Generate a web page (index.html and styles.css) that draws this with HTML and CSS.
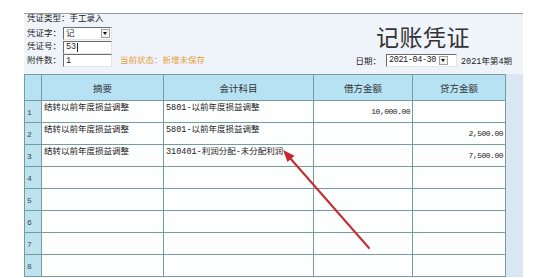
FILE: index.html
```html
<!DOCTYPE html>
<html lang="zh-CN">
<head>
  <meta charset="UTF-8">
  <title>记账凭证</title>
  <link rel="stylesheet" href="styles.css">
</head>
<body>

<div class="voucher">
  <div class="voucher-head">
    <div class="fields">
      <div class="field first">凭证类型：手工录入</div>
      <div class="field">
        <span class="label">凭证字：</span>
        <span class="select w-short"><span class="val">记</span><span class="drop"></span></span>
      </div>
      <div class="field">
        <span class="label">凭证号：</span>
        <span class="box w-short"><span class="val">53</span><span class="caret"></span></span>
      </div>
      <div class="field">
        <span class="label">附件数：</span>
        <span class="box w-short"><span class="val">1</span></span>
        <span class="status">当前状态：新增未保存</span>
      </div>
    </div>

    <div class="title-block">
      <div class="title">记账凭证</div>
      <div class="date-row">
        <span>日期：</span>
        <span class="select w-date"><span class="val">2021-04-30</span><span class="drop"></span></span>
        <span class="period">2021年第4期</span>
      </div>
    </div>
  </div>

  <div class="voucher-body">
    <table class="grid">
      <colgroup>
        <col class="c-no">
        <col class="c-sum">
        <col class="c-acc">
        <col class="c-debit">
        <col class="c-credit">
      </colgroup>
      <thead>
        <tr>
          <th class="no"></th>
          <th>摘要</th>
          <th>会计科目</th>
          <th>借方金额</th>
          <th>贷方金额</th>
        </tr>
      </thead>
      <tbody>
        <tr>
          <td class="no">1</td>
          <td class="txt">结转以前年度损益调整</td>
          <td class="txt">5801-以前年度损益调整</td>
          <td class="num">10,000.00</td>
          <td class="num"></td>
        </tr>
        <tr>
          <td class="no">2</td>
          <td class="txt">结转以前年度损益调整</td>
          <td class="txt">5801-以前年度损益调整</td>
          <td class="num"></td>
          <td class="num">2,500.00</td>
        </tr>
        <tr>
          <td class="no">3</td>
          <td class="txt">结转以前年度损益调整</td>
          <td class="txt">310401-利润分配-未分配利润</td>
          <td class="num"></td>
          <td class="num">7,500.00</td>
        </tr>
        <tr><td class="no">4</td><td></td><td></td><td></td><td></td></tr>
        <tr><td class="no">5</td><td></td><td></td><td></td><td></td></tr>
        <tr><td class="no">6</td><td></td><td></td><td></td><td></td></tr>
        <tr><td class="no">7</td><td></td><td></td><td></td><td></td></tr>
        <tr><td class="no">8</td><td></td><td></td><td></td><td></td></tr>
      </tbody>
    </table>
    <div class="scroll-strip"></div>
  </div>
</div>

<!-- 红色标注箭头 -->
<svg class="arrow" width="547" height="278" viewBox="0 0 547 278">
  <line x1="369" y1="248" x2="290" y2="158" stroke="#c62a2f" stroke-width="2" stroke-linecap="round"/>
  <polygon points="283,150 294.5,155.8 287.5,162" fill="#c62a2f"/>
</svg>

</body>
</html>
```

FILE: styles.css
```css
/* 凭证录入界面 */
body {
  margin: 0;
  background: #fff;
  color: #222;
  font-family: "Liberation Mono", "Noto Sans CJK SC", monospace;
  font-size: 8.5px;
  overflow: hidden;
  height: 278px;
}

.voucher {
  margin: 13px 0 0 24px;
  width: 499px;
  border-top: 1px solid #9a9a9a;
  background: #eef4fa;
}

.voucher-head {
  height: 60px;
  display: flex;
  justify-content: space-between;
}

.fields {
  padding-left: 3px;
}

.field {
  display: flex;
  align-items: center;
  height: 13.5px;
  line-height: 10px;
  white-space: nowrap;
}

.field.first {
  height: 13px;
  align-items: flex-start;
}

.label {
  width: 36px;
}

.select, .box {
  display: flex;
  align-items: center;
  height: 11px;
  background: #fff;
  border-top: 1px solid #6d6d6d;
  border-left: 1px solid #6d6d6d;
  border-bottom: 1px solid #e4e4e4;
  border-right: 1px solid #e4e4e4;
  white-space: nowrap;
}

.w-short {
  width: 47px;
}

.w-date {
  width: 69px;
}

.val {
  flex: 1;
  padding-left: 2px;
}

.box .val {
  flex: none;
}

.caret {
  width: 1px;
  height: 9px;
  margin-left: 1px;
  background: #222;
}

.w-date .val {
  letter-spacing: -0.4px;
}

.drop {
  position: relative;
  width: 7px;
  height: 7px;
  margin-right: 1px;
  border: 1px solid #a0a0a0;
  background: #f2f2f2;
}

.drop::after {
  content: "";
  position: absolute;
  left: 1px;
  top: 2px;
  border-left: 2.5px solid transparent;
  border-right: 2.5px solid transparent;
  border-top: 3px solid #111;
}

.w-date .drop {
  margin-right: 8px;
}

.status {
  margin-left: 8px;
  color: #e8a23c;
}

.title-block {
  display: flex;
  flex-direction: column;
  align-items: flex-end;
  padding-right: 11px;
}

.title {
  margin-top: 11px;
  margin-right: 42px;
  font-family: "Noto Sans CJK SC", sans-serif;
  font-size: 23px;
  line-height: 23px;
  color: #333;
  letter-spacing: 0.5px;
}

.date-row {
  display: flex;
  align-items: center;
  margin-top: 5px;
  height: 14px;
  white-space: nowrap;
}

.date-row .select {
  margin-left: 5px;
}

.period {
  margin-left: 4px;
}

.voucher-body {
  display: flex;
}

.scroll-strip {
  width: 18px;
  background: #dae6f1;
}

.grid {
  width: 481px;
  border-collapse: collapse;
  table-layout: fixed;
  background: #fdfefe;
}

.c-no { width: 17px; }
.c-sum { width: 122px; }
.c-acc { width: 150px; }
.c-debit { width: 99px; }
.c-credit { width: 93px; }

.grid thead tr {
  height: 26px;
}

.grid tbody tr {
  height: 22px;
}

.grid th, .grid td {
  border: 1px solid #789c9e;
  padding: 0;
  line-height: 10px;
}

.grid th {
  background: #b6e2f3;
  font-family: "Noto Sans CJK SC", sans-serif;
  font-weight: normal;
  font-size: 9.5px;
  color: #333;
}

.grid td {
  vertical-align: top;
}

.grid td.no {
  background: #bde3f1;
  vertical-align: middle;
  padding: 2px 0 0 2px;
  font-size: 8px;
  color: #444;
}

.grid td.txt {
  padding: 2px 0 0 2px;
  white-space: nowrap;
}

.grid td.num {
  vertical-align: middle;
  text-align: right;
  padding-right: 2px;
  font-size: 8px;
  letter-spacing: -0.5px;
}

.arrow {
  position: absolute;
  left: 0;
  top: 0;
  pointer-events: none;
}
```
